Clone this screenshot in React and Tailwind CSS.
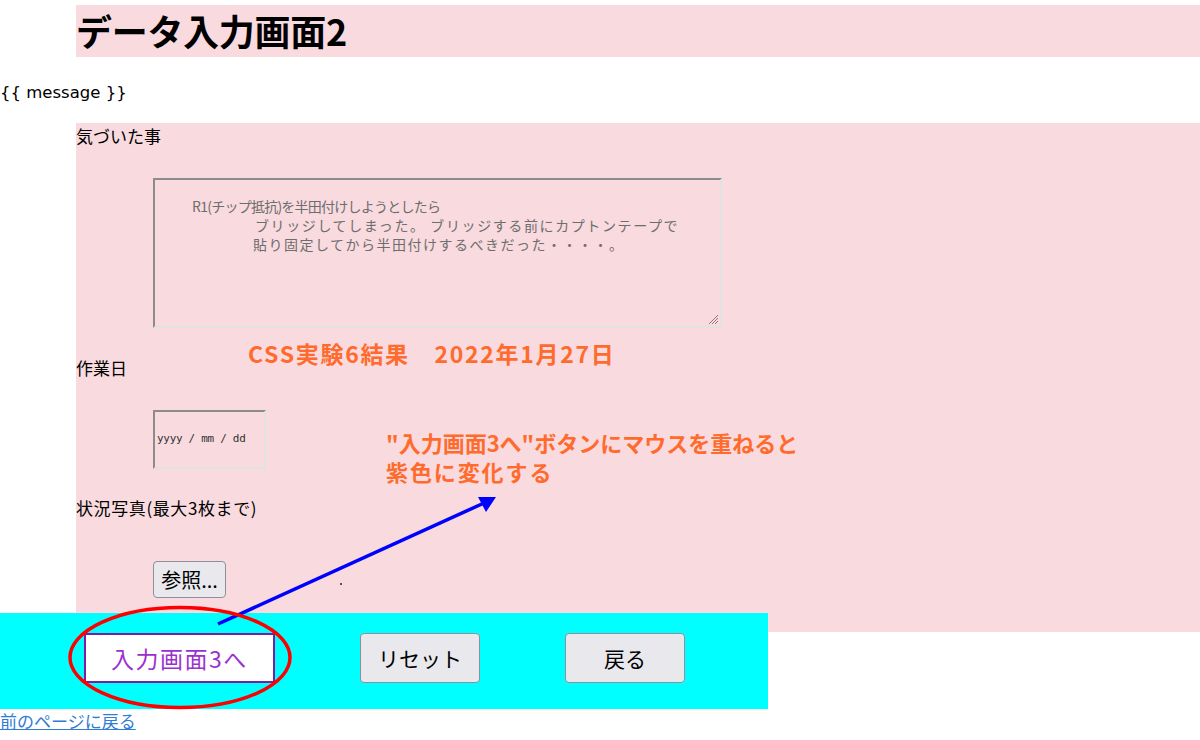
import React from "react";

export default function App() {
  return (
    <div className="relative w-[1200px] h-[740px] overflow-hidden bg-white text-black font-['Noto_Sans_CJK_JP','Noto_Sans',sans-serif]">
      {/* heading */}
      <div className="pt-[5px]">
        <h1 className="ml-[76px] h-[52px] bg-[#f8dadf] text-[36px] font-bold leading-[50px] tracking-[-0.3px]">
          データ入力画面2
        </h1>
      </div>

      <div className="mt-[24px] h-[24px] text-[16.5px] leading-[24px] font-['DejaVu_Sans',sans-serif]">{"{{ message }}"}</div>

      {/* pink form area */}
      <div className="mt-[18px] ml-[76px] h-[490px] bg-[#f8dadf] text-[17px]">
        <div className="pt-[1px] h-[25px] leading-[24px]">気づいた事</div>

        <div className="ml-[77px] mt-[30px] w-[569px] h-[150px] border-2 border-t-[#8c8c8c] border-l-[#8c8c8c] border-b-[#e2e2e2] border-r-[#e2e2e2] relative text-[14px] leading-[19px] text-[#6d6d6d] pt-[17px] whitespace-nowrap">
          <div className="ml-[37px] tracking-[-0.75px]">R1(チップ抵抗)を半田付けしようとしたら</div>
          <div className="ml-[100px] tracking-[1.6px]">ブリッジしてしまった。 ブリッジする前にカプトンテープで</div>
          <div className="ml-[98px] tracking-[1.5px]">貼り固定してから半田付けするべきだった・・・・。</div>
          <svg className="absolute right-[1px] bottom-[1px]" width="12" height="12" viewBox="0 0 12 12">
            <line x1="11" y1="2" x2="2" y2="11" stroke="#8a7a80" strokeWidth="1" />
            <line x1="11" y1="5" x2="5" y2="11" stroke="#8a7a80" strokeWidth="1" />
            <line x1="11" y1="8" x2="8" y2="11" stroke="#8a7a80" strokeWidth="1" />
          </svg>
        </div>

        <div className="mt-[28px] h-[24px] leading-[24px]">作業日</div>

        <div className="ml-[77px] mt-[30px] w-[113px] h-[59px] border-2 border-t-[#8c8c8c] border-l-[#8c8c8c] border-b-[#e2e2e2] border-r-[#e2e2e2] flex items-center pl-[2px] font-['DejaVu_Sans_Mono',monospace] text-[11px] text-[#333] tracking-[-0.3px]">
          yyyy / mm / dd
        </div>

        <div className="mt-[27px] h-[24px] leading-[24px] tracking-[0.6px]">状況写真(最大3枚まで)</div>

        <div className="mt-[41px] flex items-start">
          <button className="ml-[77px] w-[73px] h-[37px] bg-[#e9e9ed] border border-[#8f8f9d] rounded-[4px] text-[20px] leading-[22px] text-black">
            参照...
          </button>
          <div className="ml-[114px] flex flex-col">
            <span className="mt-[6px] w-[3px] h-[2px] bg-[#555]"></span>
            <span className="mt-[14px] w-[2px] h-[2px] bg-[#555]"></span>
          </div>
        </div>
      </div>

      {/* button bar */}
      <div className="flex items-start">
        <div className="w-[768px] h-[96px] bg-[#00ffff] flex items-start pt-[20px]">
          <button className="ml-[84px] w-[191px] h-[50px] bg-white border-2 border-[#7b1fa2] text-[#9b30d0] text-[23px] leading-[26px] tracking-[1.5px]">
            入力画面3へ
          </button>
          <button className="ml-[85px] w-[120px] h-[50px] bg-[#e9e9ed] border border-[#8f8f9d] rounded-[4px] text-[21px] leading-[24px] text-black">
            リセット
          </button>
          <button className="ml-[85px] w-[120px] h-[50px] bg-[#e9e9ed] border border-[#8f8f9d] rounded-[4px] text-[21px] leading-[24px] text-black">
            戻る
          </button>
        </div>
        <div className="flex-1 h-[19px] bg-[#f8dadf]"></div>
      </div>

      <a href="#" className="block mt-[1px] w-fit text-[17px] leading-[22px] text-[#2f7bd6] underline">
        前のページに戻る
      </a>

      {/* annotations */}
      <div className="absolute left-[248px] top-[338px] text-[23px] leading-[30px] font-bold text-[#ff6b2c] whitespace-nowrap tracking-[1.7px]">
        CSS実験6結果　2022年1月27日
      </div>
      <div className="absolute left-[386px] top-[428px] text-[22px] leading-[29px] font-bold text-[#ff6b2c] whitespace-nowrap">
        <div>"入力画面3へ"ボタンにマウスを重ねると</div>
        <div className="tracking-[1.9px]">紫色に変化する</div>
      </div>
      <svg className="absolute left-0 top-0 pointer-events-none" width="1200" height="740" viewBox="0 0 1200 740">
        <line x1="218" y1="624" x2="484" y2="503" stroke="#0000ff" strokeWidth="3.5" />
        <polygon points="496,497 478,497 486,512" fill="#0000ff" />
        <ellipse cx="180" cy="657.5" rx="110" ry="50" fill="none" stroke="#ff0000" strokeWidth="3.5" />
      </svg>
    </div>
  );
}
